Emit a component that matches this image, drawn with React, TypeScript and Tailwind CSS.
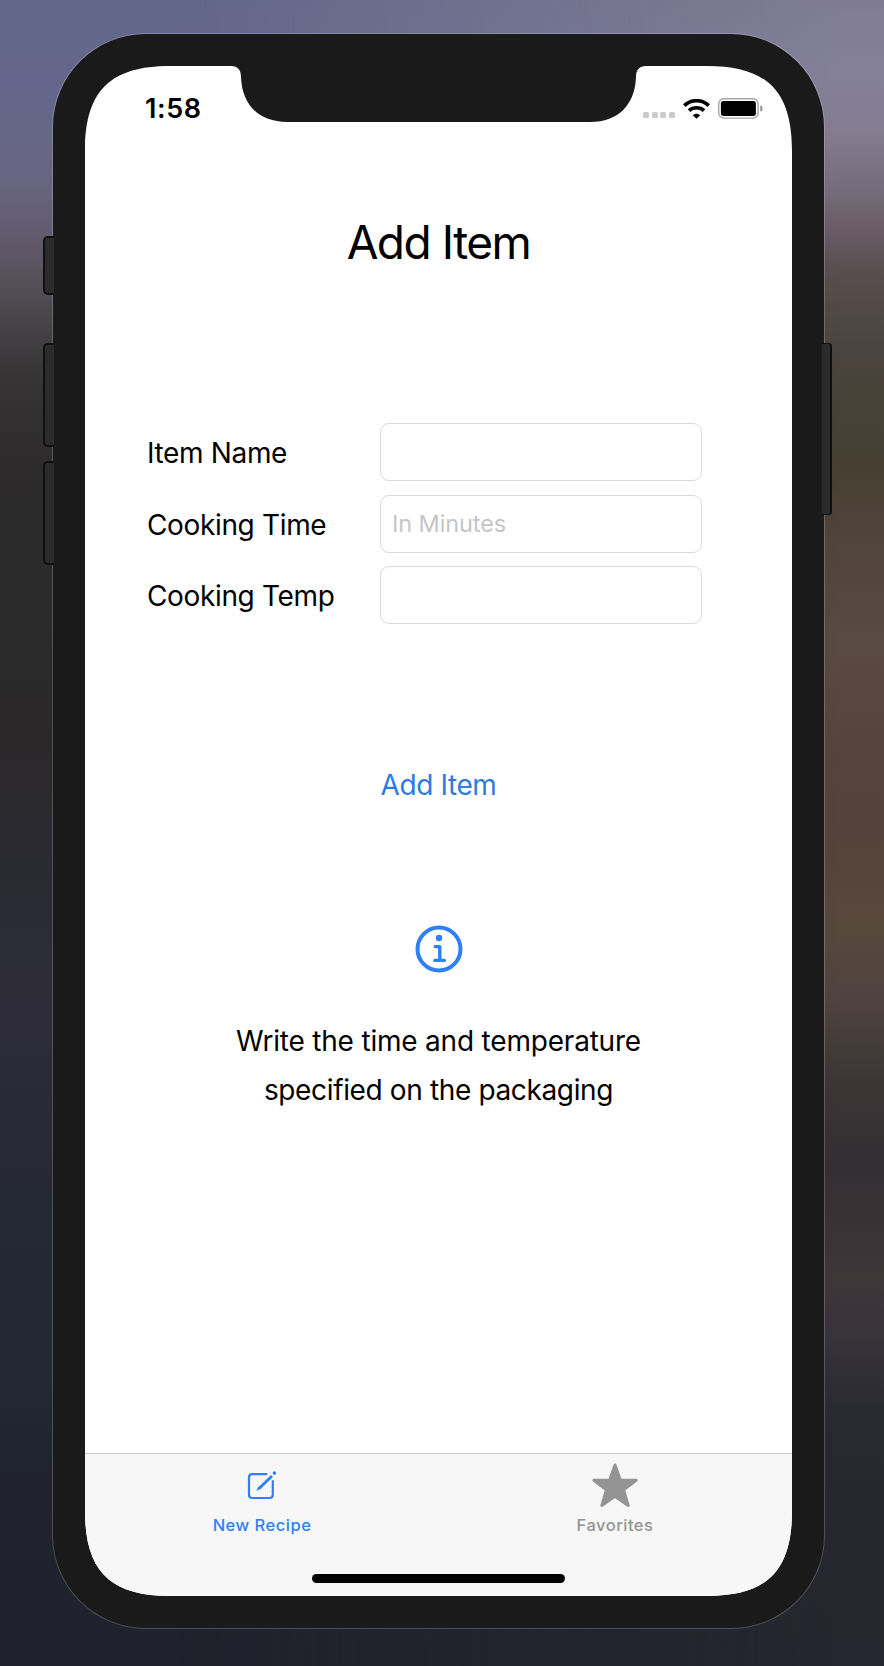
import type { ReactNode } from "react";

function WifiIcon() {
  return (
    <svg className="h-5 w-[27px]" viewBox="0 0 27 20" fill="none" stroke="#000">
      <path d="M1.3 6.6C8.1 0.1 18.9 0.1 25.7 6.6" strokeWidth="3.7" />
      <path d="M6 11.6C10.2 7.8 16.8 7.8 21 11.6" strokeWidth="3.7" />
      <path d="M13.5 19.8L9.7 16.2C12 14.1 15 14.1 17.3 16.2Z" fill="#000" stroke="none" />
    </svg>
  );
}

function BatteryIcon() {
  return (
    <svg className="h-[21px] w-[45px]" viewBox="0 0 45 21">
      <rect x="0.7" y="0.7" width="39.4" height="19.4" rx="5.2" fill="none" stroke="#a6a6a6" strokeWidth="1.4" />
      <rect x="2.9" y="2.9" width="35" height="15" rx="2.6" fill="#000" />
      <path d="M42.3 7.2C45.3 8 45.3 12.8 42.3 13.6Z" fill="#8e8e8e" />
    </svg>
  );
}

function InfoIcon() {
  return (
    <svg className="size-12" viewBox="0 0 48 48" fill="none" stroke="#2f7ff7">
      <circle cx="24" cy="24" r="21.5" strokeWidth="4" />
      <circle cx="24" cy="13" r="3.2" fill="#2f7ff7" stroke="none" />
      <path d="M20.2 21.6H24.8V35.3M19.8 35.4H29.4" strokeWidth="3.4" strokeLinecap="round" strokeLinejoin="round" />
    </svg>
  );
}

function ComposeIcon() {
  return (
    <svg className="h-[30px] w-[30px]" viewBox="0 0 30 30" fill="none" stroke="#2f7ff7">
      <path d="M20.2 4.2H5.3Q2 4.2 2 7.5V24.7Q2 28 5.3 28H22.5Q25.8 28 25.8 24.7V10.2" strokeWidth="2.2" />
      <path d="M12.3 18.2L25 6" strokeWidth="2.9" />
      <path d="M11.6 16.8L13.6 18.8L10 20.4Z" fill="#2f7ff7" strokeWidth="0.6" strokeLinejoin="round" />
      <circle cx="27.4" cy="3.1" r="1.8" fill="#2f7ff7" stroke="none" />
    </svg>
  );
}

function StarIcon() {
  return (
    <svg className="h-[45px] w-[48px]" viewBox="0 0 48 45">
      <path
        d="M24 2L29.4 17.2H45.2L32.6 26.8L37.2 42.5L24 33.2L10.8 42.5L15.4 26.8L2.8 17.2H18.6Z"
        fill="#949494"
        stroke="#949494"
        strokeWidth="3"
        strokeLinejoin="round"
      />
    </svg>
  );
}

function StatusBar() {
  return (
    <header className="flex h-[53px] shrink-0 items-end justify-between pr-[29px] pl-[60px]">
      <span className="text-[27px] leading-[20px] font-semibold tracking-[0.6px]">1:58</span>
      <div className="flex items-end">
        <div className="mr-[8px] flex gap-[2.6px] pb-px">
          {[0, 1, 2, 3].map((dot) => (
            <i key={dot} className="size-[6px] rounded-[1.5px] bg-[#cbcbcb]" />
          ))}
        </div>
        <WifiIcon />
        <div className="ml-[8px]">
          <BatteryIcon />
        </div>
      </div>
    </header>
  );
}

function Field({ label, placeholder }: { label: string; placeholder?: string }) {
  return (
    <label className="flex h-[58px] items-center">
      <span className="w-[233px] pt-[2px] text-[28px] tracking-[-0.35px] whitespace-nowrap">{label}</span>
      <input
        className="h-full w-[322px] rounded-[9px] border border-[#dadada] bg-white px-[11px] text-[23.5px] tracking-[-0.1px] placeholder:text-[#c5c5c7]"
        placeholder={placeholder}
      />
    </label>
  );
}

function Tab({ label, color, children }: { label: string; color: string; children: ReactNode }) {
  return (
    <button className={`flex w-[353px] flex-col items-center pt-[7px] ${color}`}>
      <span className="flex h-[48px] items-center justify-center">{children}</span>
      <span className="mt-[4px] text-[16.5px] leading-[24px] font-medium tracking-[0.5px]">{label}</span>
    </button>
  );
}

function SideButton({ place }: { place: string }) {
  return <div className={`absolute z-10 border-[#101011] bg-[#2b2b2b] ${place}`} />;
}

export default function App() {
  return (
    <div className="relative h-[1666px] w-[884px] overflow-hidden bg-[linear-gradient(180deg,#62678a_0px,#64678b_90px,#686580_185px,#5f5767_250px,#4b484c_310px,#373536_370px,#2d2b2b_460px,#2b2b2b_600px,#2a2829_740px,#2b2b35_900px,#2d2c38_1020px,#262934_1180px,#222834_1380px,#20222d_1500px,#1f212c_1666px)] font-['Inter',sans-serif] text-black">
      <div className="absolute inset-0 bg-[linear-gradient(180deg,#7f7c92_0px,#84809a_70px,#847d90_130px,#766c7b_190px,#6b5d68_225px,#584e4f_270px,#4c443e_345px,#463f32_460px,#51443a_540px,#594a42_640px,#56453d_740px,#55423a_830px,#57483c_930px,#4f4340_1000px,#3c3636_1080px,#332f32_1160px,#3f3638_1280px,#38343a_1330px,#2a2b30_1410px,#26272f_1530px,#25262f_1666px)] [mask-image:linear-gradient(90deg,transparent_20%,black_95%)]" />
      <SideButton place="left-[43px] top-[236px] h-[59px] w-[11px] rounded-l-[5px] border-y-2 border-l-2" />
      <SideButton place="left-[43px] top-[343px] h-[104px] w-[11px] rounded-l-[5px] border-y-2 border-l-2" />
      <SideButton place="left-[43px] top-[461px] h-[104px] w-[11px] rounded-l-[5px] border-y-2 border-l-2" />
      <SideButton place="left-[822px] top-[343px] h-[172px] w-[10px] rounded-r-[3px] border-y border-r-2" />

      <div className="relative mt-[33px] ml-[52px] h-[1596px] w-[773px] rounded-[94px] border border-white/20 bg-[#1a1a1a] bg-clip-padding px-[32px] pt-[32px]">
        <main className="flex h-[1530px] w-[707px] flex-col bg-white [clip-path:path('M0_85C0_25_25_0_85_0H146C153_0_156_4_156_11C157_38_173_56_202_56H505C534_56_550_38_551_11C551_4_554_0_561_0H622C682_0_707_25_707_85V1445C707_1505_682_1530_622_1530H85C25_1530_0_1505_0_1445Z')]">
          <StatusBar />
          <h1 className="mt-[91px] text-center text-[46px] leading-[64px] tracking-[-1.5px]">Add Item</h1>
          <form className="mt-[149px] flex flex-col gap-[13.5px] pl-[62px]">
            <Field label="Item Name" />
            <Field label="Cooking Time" placeholder="In Minutes" />
            <Field label="Cooking Temp" />
          </form>
          <button className="mt-[141px] self-center text-[28px] leading-[40px] tracking-[-0.4px] text-[#2e7bde]">Add Item</button>
          <div className="mt-[120px] self-center">
            <InfoIcon />
          </div>
          <p className="mt-[43.5px] text-center text-[28px] leading-[49.5px] tracking-[-0.2px]">
            Write the time and temperature
            <br />
            <span className="tracking-[-0.36px]">specified on the packaging</span>
          </p>
          <nav className="mt-auto flex h-[143px] flex-col items-center border-t border-[#c9c9c9] bg-[#f7f7f7]">
            <div className="flex h-[120px] shrink-0 items-start">
              <Tab label="New Recipe" color="text-[#2f7ff7]">
                <ComposeIcon />
              </Tab>
              <Tab label="Favorites" color="text-[#949494]">
                <StarIcon />
              </Tab>
            </div>
            <div className="h-[9px] w-[253px] rounded-full bg-black" />
          </nav>
        </main>
      </div>
    </div>
  );
}
